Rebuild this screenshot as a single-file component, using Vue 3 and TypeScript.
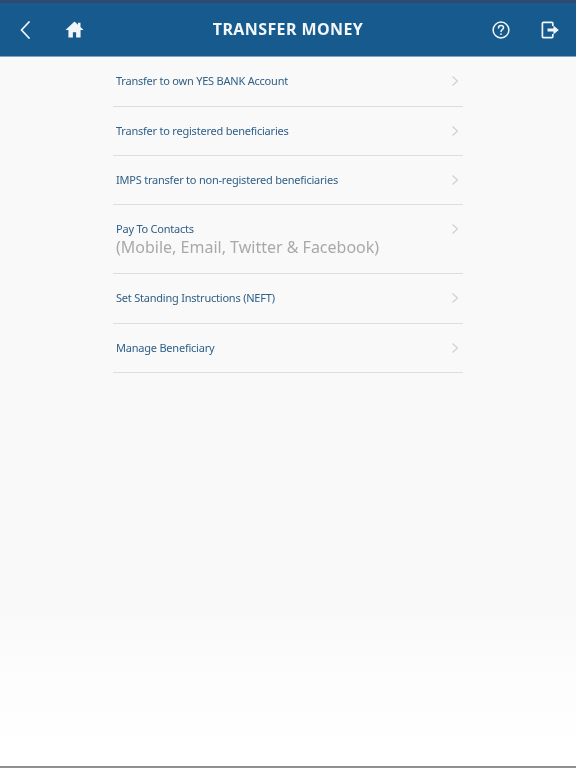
<template>
  <div class="screen">
    <header class="topbar">
      <div class="bar-side">
        <button class="icon-btn back" aria-label="Back">
          <svg viewBox="0 0 16 24" width="16" height="24" fill="none">
            <path d="M12 4L4.500 12L12 20" stroke="currentColor" stroke-width="1.800" stroke-linecap="round" stroke-linejoin="round"/>
          </svg>
        </button>
        <button class="icon-btn home" aria-label="Home">
          <svg viewBox="0 0 20 20" width="19" height="19">
            <path d="M10 1.500L.5 10.400H3.600V18.500H8.300V12.800H11.700V18.500H16.400V10.400H19.500L16.300 7.400V3H13.700V5Z" fill="currentColor"/>
          </svg>
        </button>
      </div>
      <h1 class="title">TRANSFER MONEY</h1>
      <div class="bar-side right">
        <button class="icon-btn" aria-label="Help">
          <svg viewBox="0 0 20 20" width="20" height="20" fill="none">
            <circle cx="10" cy="10" r="7.900" stroke="currentColor" stroke-width="1.500"/>
            <path d="M7.500 7.900C7.500 6.400 8.600 5.600 10 5.600C11.400 5.600 12.500 6.400 12.500 7.700C12.500 9.500 10 9.600 10 11.500" stroke="currentColor" stroke-width="1.500" stroke-linecap="round"/>
            <circle cx="10" cy="14.100" r="0.950" fill="currentColor"/>
          </svg>
        </button>
        <button class="icon-btn" aria-label="Log out">
          <svg viewBox="0 0 20 20" width="20" height="20" fill="none">
            <path d="M12.800 6V3.200C12.800 2.700 12.400 2.300 11.900 2.300H3.300C2.800 2.300 2.400 2.700 2.400 3.200V16.800C2.400 17.300 2.800 17.700 3.300 17.700H11.900C12.400 17.700 12.800 17.300 12.800 16.800V14" stroke="currentColor" stroke-width="1.700"/>
            <path d="M7.500 8.500H13.400V5.600L18.800 10L13.400 14.400V11.500H7.500Z" fill="currentColor"/>
          </svg>
        </button>
      </div>
    </header>

    <main class="menu">
      <a v-for="item in items" :key="item.label" class="row" :class="{ tall: item.sub }">
        <span class="row-text">
          <span class="row-label">{{ item.label }}</span>
          <span v-if="item.sub" class="row-sub">{{ item.sub }}</span>
        </span>
        <svg class="chev" viewBox="0 0 8 12" width="8" height="12" fill="none">
          <path d="M1.500 1.500L6.500 6L1.500 10.500" stroke="currentColor" stroke-width="1.100"/>
        </svg>
      </a>
    </main>
  </div>
</template>

<script setup lang="ts">
interface MenuItem {
  label: string;
  sub?: string;
}

const items: MenuItem[] = [
  { label: "Transfer to own YES BANK Account" },
  { label: "Transfer to registered beneficiaries" },
  { label: "IMPS transfer to non-registered beneficiaries" },
  { label: "Pay To Contacts", sub: "(Mobile, Email, Twitter & Facebook)" },
  { label: "Set Standing Instructions (NEFT)" },
  { label: "Manage Beneficiary" },
];
</script>

<style>
html,
body {
  margin: 0;
  background: #fafafa;
}
</style>

<style scoped>
.screen {
  width: 576px;
  height: 768px;
  box-sizing: border-box;
  overflow: hidden;
  display: flex;
  flex-direction: column;
  font-family: "Noto Sans", "Open Sans", sans-serif;
  background: linear-gradient(180deg, #f9f9f9 0%, #f9f9f9 80%, #fdfdfd 90%, #ffffff 100%);
  border-bottom: 2px solid #8f8f8f;
}

.topbar {
  flex: none;
  height: 57px;
  box-sizing: border-box;
  display: flex;
  align-items: center;
  justify-content: space-between;
  padding: 3px 16px 0 17px;
  background: #175a8e;
  border-top: 3px solid #31496f;
  border-bottom: 1px solid #7fa3c0;
  color: #fff;
  position: relative;
  filter: blur(0.4px);
}

.bar-side {
  display: flex;
  align-items: center;
  gap: 32px;
  margin-top: -3px;
}

.bar-side.right {
  gap: 29px;
}

.title {
  margin: -5px 0 0;
  position: absolute;
  left: 0;
  right: 0;
  text-align: center;
  font-size: 16px;
  font-weight: 700;
  letter-spacing: 0.4px;
  color: #f2f6f9;
}

.icon-btn {
  padding: 0;
  border: 0;
  background: none;
  color: #f1f5f8;
  display: flex;
  position: relative;
  z-index: 1;
}

.menu {
  width: 350px;
  margin-left: 113px;
  display: flex;
  flex-direction: column;
  filter: blur(0.4px);
}

.row {
  height: 49.400px;
  box-sizing: border-box;
  display: flex;
  justify-content: space-between;
  align-items: flex-start;
  padding: 16px 4px 0 3px;
  border-bottom: 1.500px solid #dedede;
}

.row:first-child {
  height: 49.500px;
}

.row.tall {
  height: 69px;
}

.row-text {
  display: flex;
  flex-direction: column;
}

.row-label {
  font-size: 11px;
  line-height: 15px;
  letter-spacing: -0.22px;
  color: #2f6088;
}

.row-sub {
  font-size: 16px;
  line-height: 22px;
  color: #a9a9a9;
}

.chev {
  color: #cfcfcf;
  margin-top: 2px;
}
</style>
